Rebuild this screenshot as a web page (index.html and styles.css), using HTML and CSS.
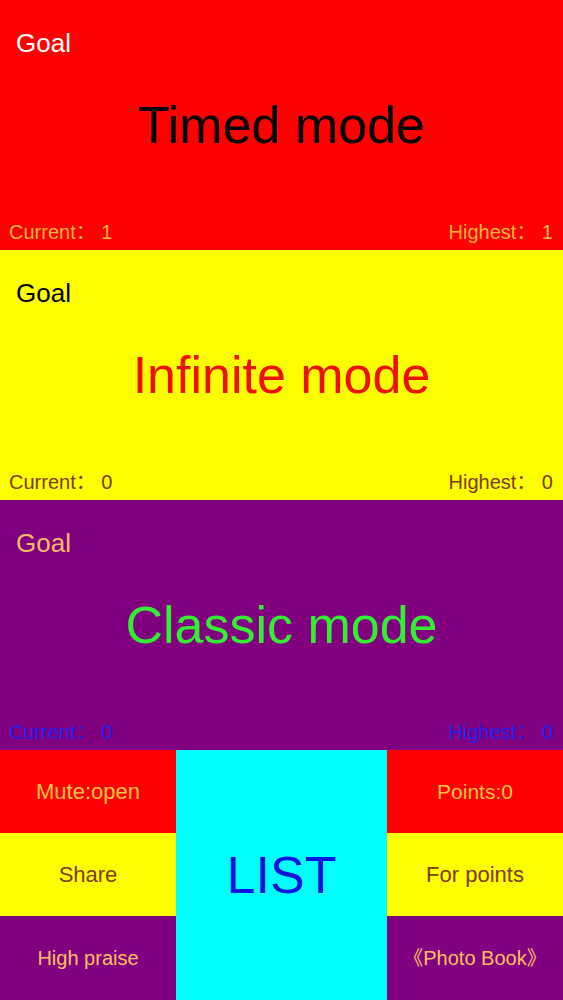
FILE: index.html
```html
<!DOCTYPE html>
<html lang="en">
<head>
<meta charset="utf-8">
<title>Modes</title>
<link rel="stylesheet" href="styles.css">
</head>
<body>
<main class="app">
  <section class="panel panel-timed">
    <div class="goal">Goal</div>
    <div class="title">Timed mode</div>
    <div class="stats"><span>Current：&nbsp;1</span><span>Highest：&nbsp;1</span></div>
  </section>
  <section class="panel panel-infinite">
    <div class="goal">Goal</div>
    <div class="title">Infinite mode</div>
    <div class="stats"><span>Current：&nbsp;0</span><span>Highest：&nbsp;0</span></div>
  </section>
  <section class="panel panel-classic">
    <div class="goal">Goal</div>
    <div class="title">Classic mode</div>
    <div class="stats"><span>Current：&nbsp;0</span><span>Highest：&nbsp;0</span></div>
  </section>
  <section class="menu">
    <div class="cell c-red t-22">Mute:open</div>
    <div class="list">LIST</div>
    <div class="cell c-red t-21">Points:0</div>
    <div class="cell c-yellow t-22">Share</div>
    <div class="cell c-yellow t-22">For points</div>
    <div class="cell c-purple t-20">High praise</div>
    <div class="cell c-purple t-20">《Photo Book》</div>
  </section>
</main>
</body>
</html>
```

FILE: styles.css
```css
html, body {
  margin: 0;
  padding: 0;
}
body {
  font-family: "Liberation Sans", Arial, "Noto Sans CJK SC", sans-serif;
  width: 563px;
  height: 1000px;
  overflow: hidden;
}
.app {
  display: flex;
  flex-direction: column;
  width: 563px;
}
.panel {
  height: 250px;
  display: grid;
  grid-template-columns: 1fr;
  grid-template-rows: 1fr;
}
.panel > * {
  grid-area: 1 / 1;
}
.goal {
  align-self: start;
  justify-self: start;
  font-size: 26px;
  line-height: 26px;
  padding: 30px 0 0 16px;
}
.title {
  align-self: center;
  justify-self: center;
  font-size: 52px;
  line-height: 52px;
}
.stats {
  align-self: end;
  display: flex;
  justify-content: space-between;
  font-size: 20px;
  line-height: 20px;
  padding: 0 10px 8px 9px;
}
.panel-timed { background: #ff0000; }
.panel-timed .goal { color: #ffffff; }
.panel-timed .title { color: #000000; }
.panel-timed .stats { color: #f9b43a; }

.panel-infinite { background: #ffff00; }
.panel-infinite .goal { color: #000000; }
.panel-infinite .title { color: #ee1100; }
.panel-infinite .stats { color: #7c3c12; }

.panel-classic { background: #800080; }
.panel-classic .goal { color: #f8bc68; }
.panel-classic .title { color: #33ee33; }
.panel-classic .stats { color: #2020ee; }

.menu {
  height: 250px;
  display: grid;
  grid-template-columns: 176px 1fr 176px;
  grid-template-rows: 83px 83px 84px;
}
.cell {
  display: flex;
  align-items: center;
  justify-content: center;
  white-space: nowrap;
  line-height: 1;
}
.list {
  grid-column: 2;
  grid-row: 1 / span 3;
  background: #00ffff;
  color: #0a14e0;
  font-size: 52px;
  display: flex;
  align-items: center;
  justify-content: center;
}
.c-red { background: #ff0000; color: #ffc040; }
.c-yellow { background: #ffff00; color: #7c3c14; }
.c-purple { background: #800080; color: #ffc060; }
.t-22 { font-size: 22px; }
.t-21 { font-size: 21px; }
.t-20 { font-size: 20px; }
```
